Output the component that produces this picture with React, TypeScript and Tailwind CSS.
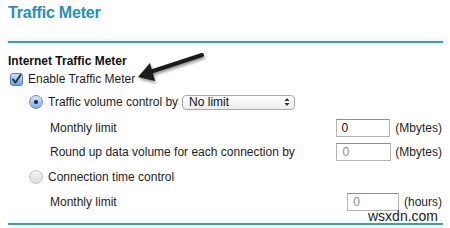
import React from 'react';

function Checkbox() {
  return (
    <span className="inline-flex w-[13px] h-[13px] rounded-[3px] border border-[#5a7fb5] bg-gradient-to-b from-[#cfe0f7] to-[#6e9ee0] items-center justify-center">
      <svg width="11" height="11" viewBox="0 0 11 11">
        <path d="M2 5.5 L4.5 8.5 L9.5 1" fill="none" stroke="#1b2a40" strokeWidth="1.8" strokeLinecap="round" strokeLinejoin="round" />
      </svg>
    </span>
  );
}

function Radio({ on }: { on?: boolean }) {
  if (on) {
    return (
      <span className="inline-flex w-[14px] h-[14px] rounded-full border border-[#6f8fbd] bg-gradient-to-b from-[#d6e6fa] to-[#7fa9e3] items-center justify-center">
        <span className="w-[4px] h-[4px] rounded-full bg-[#1c2433]" />
      </span>
    );
  }
  return <span className="inline-block w-[14px] h-[14px] rounded-full border border-[#c4c4c4] bg-gradient-to-b from-[#f4f4f4] to-[#dedede]" />;
}

function NumInput({ w, dim }: { w: string; dim?: boolean }) {
  return (
    <div className={`${w} h-[18px] border border-[#b5b5b5] border-t-[#8f8f8f] bg-white flex items-center pl-[5px] text-[12px] ${dim ? 'text-[#8a8a8a]' : 'text-[#111]'}`}>
      0
    </div>
  );
}

export default function App() {
  return (
    <div className="relative w-[450px] h-[228px] overflow-hidden bg-white text-[12px] text-[#1e1e1e]" style={{ fontFamily: '"Liberation Sans", Arial, sans-serif' }}>
      <div className="px-[8px]">
        <div className="h-[41px] pt-[3px]">
          <h1 className="text-[16px] leading-[20px] font-bold text-[#2a8cbf] tracking-[-0.2px]">Traffic Meter</h1>
        </div>
        <div className="h-[2px] w-[435px] bg-[#4b9ca2] shadow-[0_0_3px_2px_#e2f7f9]" />

        <div className="pt-[10px]">
          <div className="h-[16px] leading-[16px] font-bold text-[#111]">Internet Traffic Meter</div>
          <div className="h-[20px] flex items-center gap-[5px] pl-[2px]">
            <Checkbox />
            <span>Enable Traffic Meter</span>
          </div>
          <div className="h-[26px] flex items-center pl-[21px]">
            <Radio on />
            <span className="ml-[5px]">Traffic volume control by</span>
            <div className="ml-[4px] w-[113px] h-[15px] rounded-[4px] border border-[#a9a9a9] bg-gradient-to-b from-white to-[#ececec] flex items-center justify-between pl-[6px] pr-[4px] text-[12px] text-[#111]">
              <span>No limit</span>
              <svg width="6" height="10" viewBox="0 0 6 10">
                <path d="M0.5 4 L3 1 L5.5 4 Z M0.5 6 L3 9 L5.5 6 Z" fill="#333" />
              </svg>
            </div>
          </div>
          <div className="h-[25px] flex items-center">
            <span className="w-[329px] pl-[42px]">Monthly limit</span>
            <NumInput w="w-[55px]" />
            <span className="ml-[5px]">(Mbytes)</span>
          </div>
          <div className="h-[24px] flex items-center">
            <span className="w-[329px] pl-[42px]">Round up data volume for each connection by</span>
            <NumInput w="w-[55px]" dim />
            <span className="ml-[4px]">(Mbytes)</span>
          </div>
          <div className="h-[26px] flex items-center pl-[21px]">
            <Radio />
            <span className="ml-[5px]">Connection time control</span>
          </div>
          <div className="h-[24px] flex items-center">
            <span className="w-[340px] pl-[42px]">Monthly limit</span>
            <NumInput w="w-[52px]" dim />
            <span className="ml-[5px]">(hours)</span>
          </div>
        </div>
        <div className="mt-[9px] h-[2px] w-[435px] bg-[#4b9ca2] shadow-[0_0_3px_1px_#e6f6f7]" />
      </div>

      <svg className="absolute left-0 top-0" width="450" height="228" viewBox="0 0 450 228">
        <defs>
          <filter id="sh" x="-20%" y="-20%" width="140%" height="160%">
            <feGaussianBlur in="SourceAlpha" stdDeviation="1.5" />
            <feOffset dx="1" dy="2" result="b" />
            <feComponentTransfer><feFuncA type="linear" slope="0.45" /></feComponentTransfer>
            <feMerge>
              <feMergeNode />
              <feMergeNode in="SourceGraphic" />
            </feMerge>
          </filter>
        </defs>
        <g filter="url(#sh)" fill="#1a1a1a">
          <path d="M202 55 L150 72" stroke="#1a1a1a" strokeWidth="4" strokeLinecap="round" />
          <path d="M138 77 L150 63 L155 81 Z" />
        </g>
      </svg>

      <span className="absolute left-[368px] top-[210px] text-[14px] leading-[12px] text-[#222]">wsxdn.com</span>
    </div>
  );
}
